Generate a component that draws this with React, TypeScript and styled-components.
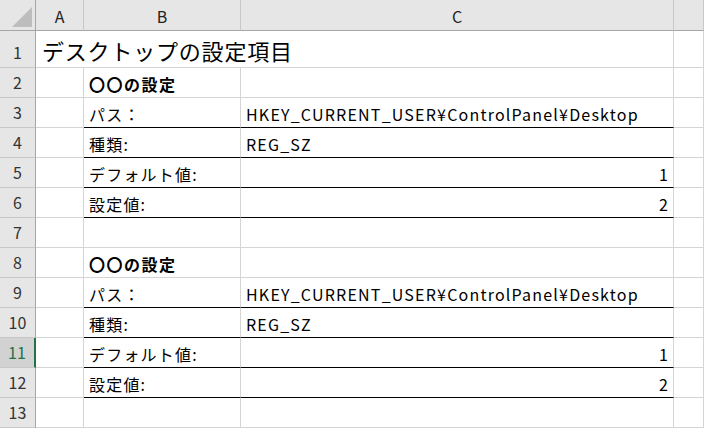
import styled, { createGlobalStyle } from 'styled-components';

const GlobalStyle = createGlobalStyle`
  html, body {
    margin: 0;
    padding: 0;
    background: #ffffff;
  }
  body {
    font-family: "Noto Sans CJK JP", "Noto Sans", sans-serif;
    color: #000;
  }
`;

const GRID = '#d4d4d4';
const HEADER_BG = '#e6e6e6';
const HEADER_LINE = '#a6a6a6';
const EXCEL_GREEN = '#217346';

const Sheet = styled.div`
  display: grid;
  grid-template-columns: 36px 48px 157px 433px 30px;
  grid-template-rows: 31px 37px repeat(12, 30px);
  width: 704px;
  height: 428px;
  overflow: hidden;
`;

const Corner = styled.div`
  position: relative;
  background: ${HEADER_BG};
  border-right: 1px solid ${HEADER_LINE};
  border-bottom: 1px solid ${HEADER_LINE};
  box-sizing: border-box;

  &::after {
    content: '';
    position: absolute;
    right: 3px;
    bottom: 3px;
    width: 0;
    height: 0;
    border-left: 20px solid transparent;
    border-bottom: 20px solid #bdbdbd;
  }
`;

const ColHeader = styled.div`
  display: flex;
  align-items: center;
  justify-content: center;
  background: ${HEADER_BG};
  border-right: 1px solid #c8c8c8;
  border-bottom: 1px solid ${HEADER_LINE};
  box-sizing: border-box;
  font-size: 16px;
  color: #222;
  padding-top: 2px;
`;

const RowHeader = styled.div<{ $selected?: boolean }>`
  display: flex;
  align-items: flex-end;
  justify-content: center;
  padding-bottom: 3px;
  background: ${({ $selected }) => ($selected ? '#d2d2d2' : HEADER_BG)};
  border-right: ${({ $selected }) =>
    $selected ? `2px solid ${EXCEL_GREEN}` : `1px solid ${HEADER_LINE}`};
  border-bottom: 1px solid #c8c8c8;
  box-sizing: border-box;
  font-size: 16px;
  color: ${({ $selected }) => ($selected ? EXCEL_GREEN : '#333')};
`;

const Cell = styled.div<{
  $span?: number;
  $ruled?: boolean;
  $right?: boolean;
  $bold?: boolean;
  $title?: boolean;
}>`
  grid-column: span ${({ $span }) => $span ?? 1};
  display: flex;
  align-items: flex-end;
  justify-content: ${({ $right }) => ($right ? 'flex-end' : 'flex-start')};
  padding: 0 ${({ $right }) => ($right ? '4px' : '5px')} 3px 5px;
  border-right: 1px solid ${GRID};
  border-bottom: 1px solid ${({ $ruled }) => ($ruled ? '#000' : GRID)};
  box-sizing: border-box;
  white-space: nowrap;
  font-size: ${({ $title }) => ($title ? '22px' : '16px')};
  font-weight: ${({ $bold }) => ($bold ? 700 : 400)};
  letter-spacing: ${({ $title, $bold }) => ($title ? '0.8px' : $bold ? '1.5px' : '1.2px')};
  line-height: 1.25;
  padding-left: ${({ $title }) => ($title ? '6px' : '5px')};
`;

type Row = {
  cells: { text?: string; span?: number; ruled?: boolean; right?: boolean; bold?: boolean; title?: boolean }[];
};

const PATH = 'HKEY_CURRENT_USER¥ControlPanel¥Desktop';

function section(): Row[] {
  return [
    { cells: [{}, { text: '〇〇の設定', bold: true }, {}, {}] },
    { cells: [{}, { text: 'パス：', ruled: true }, { text: PATH, ruled: true }, {}] },
    { cells: [{}, { text: '種類:', ruled: true }, { text: 'REG_SZ', ruled: true }, {}] },
    { cells: [{}, { text: 'デフォルト値:', ruled: true }, { text: '1', ruled: true, right: true }, {}] },
    { cells: [{}, { text: '設定値:', ruled: true }, { text: '2', ruled: true, right: true }, {}] },
  ];
}

const rows: Row[] = [
  { cells: [{ text: 'デスクトップの設定項目', span: 3, title: true }, {}] },
  ...section(),
  { cells: [{}, {}, {}, {}] },
  ...section(),
  { cells: [{}, {}, {}, {}] },
];

export default function App() {
  return (
    <>
      <GlobalStyle />
      <Sheet>
        <Corner />
        <ColHeader>A</ColHeader>
        <ColHeader>B</ColHeader>
        <ColHeader>C</ColHeader>
        <ColHeader />
        {rows.map((row, i) => (
          <RowCells key={i} index={i + 1} row={row} />
        ))}
      </Sheet>
    </>
  );
}

function RowCells({ index, row }: { index: number; row: Row }) {
  return (
    <>
      <RowHeader $selected={index === 11}>{index}</RowHeader>
      {row.cells.map((c, j) => (
        <Cell
          key={j}
          $span={c.span}
          $ruled={c.ruled}
          $right={c.right}
          $bold={c.bold}
          $title={c.title}
        >
          {c.text}
        </Cell>
      ))}
    </>
  );
}
